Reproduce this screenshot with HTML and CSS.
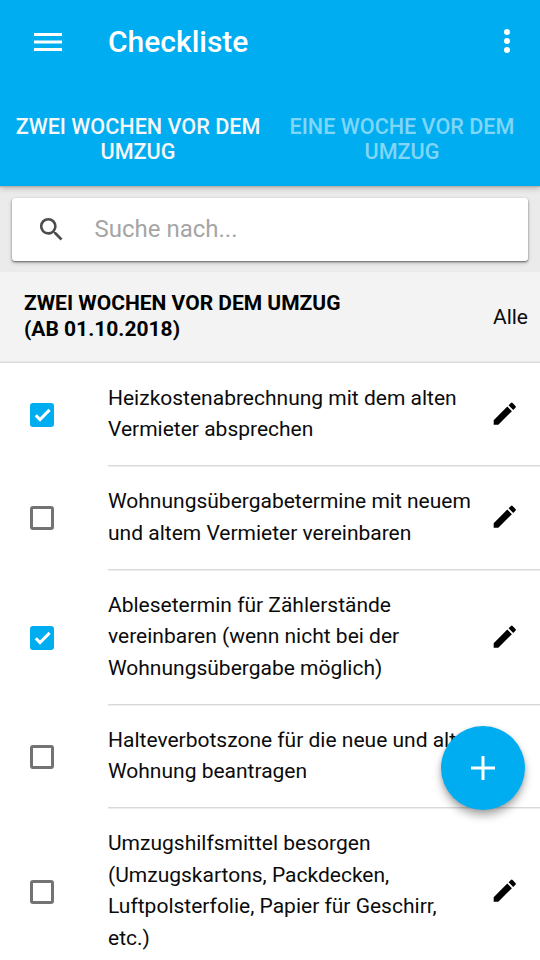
FILE: index.html
```html
<!DOCTYPE html>
<html lang="de">
<head>
<meta charset="utf-8">
<title>Checkliste</title>
<link rel="stylesheet" href="styles.css">
</head>
<body>
<svg width="0" height="0" class="defs">
  <symbol id="pencil" viewBox="0 0 24 24"><path d="M3 17.25V21h3.75L17.81 9.94l-3.75-3.75L3 17.25zM20.71 7.04a1 1 0 0 0 0-1.41l-2.34-2.34a1 1 0 0 0-1.41 0l-1.83 1.83 3.75 3.75 1.83-1.83z"/></symbol>
  <symbol id="check" viewBox="0 0 24 24"><path d="M5.8 12.2l4.2 4.3L19.6 6.9" fill="none" stroke="#fff" stroke-width="3"/></symbol>
</svg>
<div class="app">
  <header class="header">
    <div class="toolbar">
      <svg class="menu" viewBox="0 0 28 18"><path d="M0 0h28v3H0zM0 7.5h28v3H0zM0 15h28v3H0z"/></svg>
      <h1 class="title">Checkliste</h1>
      <svg class="more" viewBox="0 0 6 24"><circle cx="3" cy="3" r="3"/><circle cx="3" cy="12" r="3"/><circle cx="3" cy="21" r="3"/></svg>
    </div>
    <nav class="tabs">
      <div class="tab active">ZWEI WOCHEN VOR DEM<br>UMZUG</div>
      <div class="tab">EINE WOCHE VOR DEM<br>UMZUG</div>
    </nav>
  </header>
  <div class="search-area">
    <div class="search">
      <svg class="search-icon" viewBox="0 0 24 24"><path d="M15.5 14h-.79l-.28-.27A6.47 6.47 0 0 0 16 9.5 6.5 6.5 0 1 0 9.5 16c1.61 0 3.09-.59 4.23-1.57l.27.28v.79l5 4.99L20.49 19l-4.99-5zm-6 0a4.5 4.5 0 1 1 0-9 4.5 4.5 0 0 1 0 9z"/></svg>
      <span class="placeholder">Suche nach...</span>
    </div>
  </div>
  <section class="section-head">
    <h2>ZWEI WOCHEN VOR DEM UMZUG<br>(AB 01.10.2018)</h2>
    <span class="filter">Alle</span>
  </section>
  <main class="list">
    <div class="item"><div class="check-cell"><span class="box checked"><svg viewBox="0 0 24 24"><use href="#check"/></svg></span></div><div class="content"><p>Heizkostenabrechnung mit dem alten<br>Vermieter absprechen</p><svg class="edit"><use href="#pencil"/></svg></div></div>
    <div class="item"><div class="check-cell"><span class="box"></span></div><div class="content"><p>Wohnungsübergabetermine mit neuem<br>und altem Vermieter vereinbaren</p><svg class="edit"><use href="#pencil"/></svg></div></div>
    <div class="item"><div class="check-cell"><span class="box checked"><svg viewBox="0 0 24 24"><use href="#check"/></svg></span></div><div class="content"><p>Ablesetermin für Zählerstände<br>vereinbaren (wenn nicht bei der<br>Wohnungsübergabe möglich)</p><svg class="edit"><use href="#pencil"/></svg></div></div>
    <div class="item"><div class="check-cell"><span class="box"></span></div><div class="content"><p>Halteverbotszone für die neue und alte<br>Wohnung beantragen</p><svg class="edit"><use href="#pencil"/></svg></div></div>
    <div class="item"><div class="check-cell"><span class="box"></span></div><div class="content"><p>Umzugshilfsmittel besorgen<br>(Umzugskartons, Packdecken,<br>Luftpolsterfolie, Papier für Geschirr,<br>etc.)</p><svg class="edit"><use href="#pencil"/></svg></div></div>
  </main>
  <div class="fab"><svg viewBox="0 0 24 24"><path d="M10.5 0h3v10.5H24v3H13.5V24h-3V13.5H0v-3h10.5z"/></svg></div>
</div>
</body>
</html>
```
FILE: styles.css
```css
* { box-sizing: border-box; }
body { margin: 0; background: #fff; color: #0b0b0b; font-family: Roboto, sans-serif; font-size: 21px; }
h1, h2, p { margin: 0; }
.defs { display: none; }
.app { position: relative; width: 540px; height: 960px; overflow: hidden; }

.header { position: relative; z-index: 1; height: 186px; background: #00adf0; color: #fff; box-shadow: 0 0 1px 1px rgba(190, 165, 160, .7), 0 2px 6px rgba(0, 0, 0, .25); }
.toolbar { display: flex; align-items: center; height: 84px; padding: 0 30px 0 34px; }
.menu { width: 28px; height: 18px; fill: #fff; }
.title { flex: 1; margin-left: 46px; font-size: 30px; font-weight: 500; line-height: 36px; }
.more { width: 6px; height: 24px; fill: #fff; margin-top: -2px; }
.tabs { display: flex; padding-top: 29.5px; }
.tab { width: 252px; text-align: center; font-weight: 500; font-size: 21.6px; line-height: 25.5px; white-space: nowrap; color: rgba(255, 255, 255, .5); }
.tab.active { width: 276px; color: #f7f7f7; }

.search-area { height: 86px; padding: 12px; background: #ebebeb; }
.search { display: flex; align-items: center; height: 63px; padding-left: 24px; background: #fff; border-radius: 3px; box-shadow: 0 1px 2px rgba(0, 0, 0, .5), 0 2px 4px rgba(0, 0, 0, .18); }
.search-icon { width: 31px; height: 31px; fill: #4d4d4d; }
.placeholder { margin: -2px 0 0 27.5px; color: #a5a5a5; font-size: 24px; }

.section-head { display: flex; align-items: center; justify-content: space-between; height: 91px; padding: 0 12px 0 24px; background: #f3f3f3; border-bottom: 1px solid #d9d9d9; box-shadow: inset 0 -1px #e9e9e9; }
h2 { font-size: 21px; font-weight: 700; line-height: 25.5px; color: #000; margin-top: -.5px; }

.item { display: flex; }
.check-cell { display: flex; align-items: center; width: 108px; padding-left: 30px; }
.box { width: 24px; height: 24px; border: 3px solid #737373; border-radius: 3px; }
.box.checked { border: 0; background: #00adf0; }
.box svg { display: block; width: 24px; height: 24px; }
.content { flex: 1; display: flex; align-items: center; justify-content: space-between; margin-bottom: .6px; padding: 19.5px 20px 19.5px 0; border-bottom: 1px solid #d9d9d9; box-shadow: 0 1px #eee; }
.content p { line-height: 31.5px; white-space: nowrap; }
.edit { flex: none; width: 29.5px; height: 29.5px; margin: -1px .5px 0 0; fill: #000; }

.fab { position: absolute; left: 441px; top: 726px; width: 84px; height: 84px; display: flex; align-items: center; justify-content: center; border-radius: 50%; background: #00adf0; box-shadow: 0 6px 9px rgba(0, 0, 0, .3), 0 1px 4px rgba(0, 0, 0, .12); }
.fab svg { width: 24px; height: 24px; fill: #fff; }
```
